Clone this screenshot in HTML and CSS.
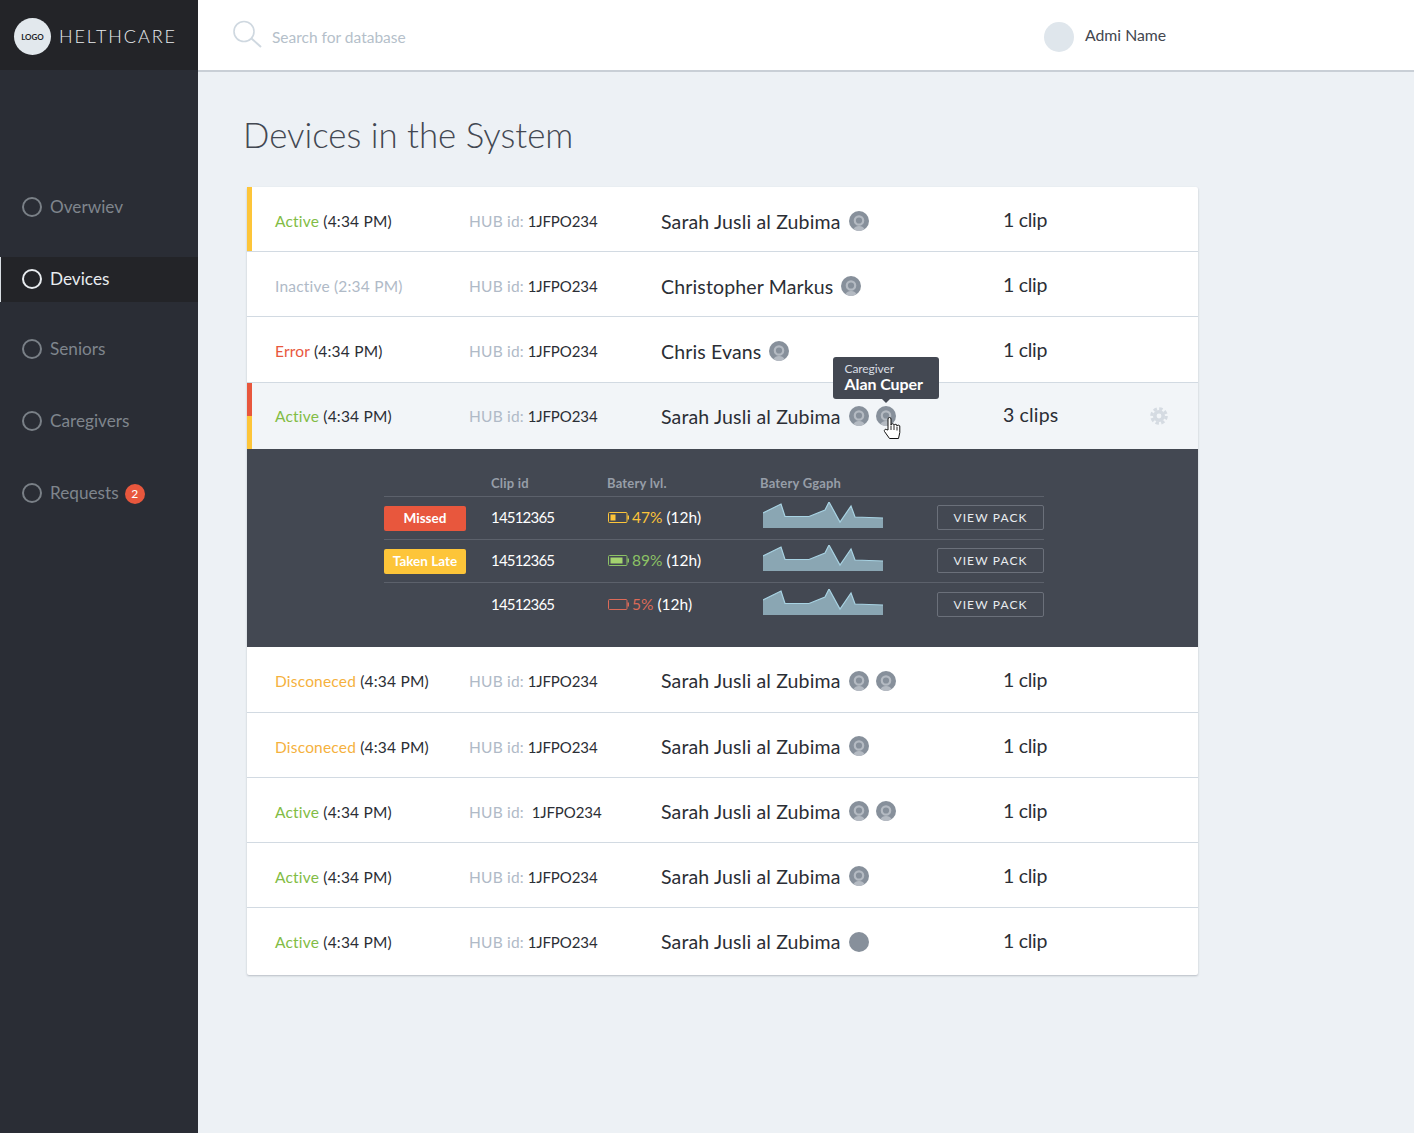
FILE: index.html
```html
<!DOCTYPE html>
<html lang="en">
    <head>
        <meta charset="UTF-8" />
        <meta name="viewport" content="width=device-width, initial-scale=1.0" />
        <title>Devices in the System</title>
        <link rel="stylesheet" href="styles.css">
    </head>
    <body>
        <svg class="defs" width="0" height="0" aria-hidden="true">
            <symbol id="person" viewBox="0 0 20 20">
                <circle cx="10" cy="10" r="10" fill="#87909b" />
                <path d="M4.500 18.300c1-2.500 3-3.300 5.500-3.300s4.500.8 5.500 3.300a10 10 0 0 1-11 0z" fill="#b4bac2" />
                <circle cx="10" cy="9.500" r="4.200" fill="none" stroke="#b4bac2" stroke-width="2.200" />
            </symbol>
            <symbol id="spark" viewBox="0 0 120 26">
                <path d="M0 11 18 2 22 14.500H46L62 8 66 0 77 20 88 4 92 15 120 16V26H0z" fill="#8aa6b3" />
                <path d="M0 11 18 2 22 14.500H46L62 8 66 0 77 20 88 4 92 15 120 16" fill="none" stroke="#a8d3e3" stroke-width="1.200" />
            </symbol>
        </svg>

        <aside class="sidebar">
            <div class="logo">
                <span class="logo-mark">LOGO</span>
                <span class="logo-name">HELTHCARE</span>
            </div>
            <nav class="nav">
                <a class="nav-item"><i class="ring"></i>Overwiev</a>
                <a class="nav-item active"><i class="ring"></i>Devices</a>
                <a class="nav-item"><i class="ring"></i>Seniors</a>
                <a class="nav-item"><i class="ring"></i>Caregivers</a>
                <a class="nav-item"><i class="ring"></i>Requests<span class="count">2</span></a>
            </nav>
        </aside>

        <div class="main">
            <header class="topbar">
                <div class="search">
                    <svg width="30" height="30" viewBox="0 0 30 30">
                        <circle cx="12" cy="11.500" r="10" fill="none" stroke="#cfd8e0" stroke-width="1.600" />
                        <path d="M19.500 18.500 29 27" fill="none" stroke="#cfd8e0" stroke-width="2" />
                    </svg>
                    <span>Search for database</span>
                </div>
                <div class="user">
                    <span class="user-pic"></span>
                    <span class="user-name">Admi Name</span>
                </div>
            </header>

            <section class="content">
                <h1>Devices in the System</h1>

                <div class="card">
                    <div class="row">
                        <i class="bar bar-yellow"></i>
                        <div class="status"><b class="green">Active</b> (4:34 PM)</div>
                        <div class="hub"><b>HUB id:</b> 1JFPO234</div>
                        <div class="name">Sarah Jusli al Zubima<svg class="person"><use href="#person" /></svg></div>
                        <div class="clips">1 clip</div>
                    </div>
                    <div class="row">
                        <i></i>
                        <div class="status grey"><b class="grey">Inactive</b> (2:34 PM)</div>
                        <div class="hub"><b>HUB id:</b> 1JFPO234</div>
                        <div class="name">Christopher Markus<svg class="person"><use href="#person" /></svg></div>
                        <div class="clips">1 clip</div>
                    </div>
                    <div class="row tall">
                        <i></i>
                        <div class="status"><b class="red">Error</b> (4:34 PM)</div>
                        <div class="hub"><b>HUB id:</b> 1JFPO234</div>
                        <div class="name">Chris Evans<svg class="person"><use href="#person" /></svg></div>
                        <div class="clips">1 clip</div>
                    </div>
                    <div class="row open">
                        <i class="bar bar-split"></i>
                        <div class="status"><b class="green">Active</b> (4:34 PM)</div>
                        <div class="hub"><b>HUB id:</b> 1JFPO234</div>
                        <div class="name">Sarah Jusli al Zubima<svg class="person"><use href="#person" /></svg>
                            <span class="hovered">
                                <svg class="person"><use href="#person" /></svg>
                                <span class="tooltip"><small>Caregiver</small>Alan Cuper</span>
                                <svg class="hand" width="18" height="24" viewBox="0 0 18 24">
                                    <path d="M5 14V3a1.500 1.500 0 0 1 3 0v6a1.500 1.500 0 0 1 3 .5 1.500 1.500 0 0 1 3 .7 1.400 1.400 0 0 1 2.800.8v5.500L15.500 22.500H6.500L1.500 15.500c-.8-1.500 1-3 2.300-1.800z" fill="#fff" stroke="#111" stroke-width="1" stroke-linejoin="round" />
                                    <path d="M8 9.500v4.500M11 10v4M14 11v3.500" stroke="#111" stroke-width=".9" fill="none" />
                                </svg>
                            </span>
                        </div>
                        <div class="clips clips-wide">3 clips
                            <svg class="gear" width="18" height="18" viewBox="0 0 18 18">
                                <circle cx="9" cy="9" r="7.200" fill="none" stroke="#d5dbe2" stroke-width="3.200" stroke-dasharray="3.400 2.250" />
                                <circle cx="9" cy="9" r="4.200" fill="none" stroke="#d5dbe2" stroke-width="3.600" />
                            </svg>
                        </div>
                    </div>

                    <div class="detail">
                        <div class="detail-head">
                            <span></span>
                            <span>Clip id</span>
                            <span>Batery lvl.</span>
                            <span>Batery Ggaph</span>
                            <span></span>
                        </div>
                        <div class="detail-row">
                            <span class="pill pill-red">Missed</span>
                            <span class="clip-id">14512365</span>
                            <span class="battery">
                                <svg width="21" height="11" viewBox="0 0 21 11">
                                    <rect x=".5" y=".5" width="18.500" height="10" rx="1" fill="none" stroke="#fdc539" />
                                    <rect x="2.500" y="2.500" width="5" height="6" fill="#fdc539" />
                                    <rect x="19.500" y="3.500" width="1.500" height="4" fill="#fdc539" />
                                </svg>
                                <em class="yellow">47%</em>
                                <span>(12h)</span>
                            </span>
                            <svg class="spark"><use href="#spark" /></svg>
                            <a class="pack">VIEW PACK</a>
                        </div>
                        <div class="detail-row">
                            <span class="pill pill-yellow">Taken Late</span>
                            <span class="clip-id">14512365</span>
                            <span class="battery">
                                <svg width="21" height="11" viewBox="0 0 21 11">
                                    <rect x=".5" y=".5" width="18.500" height="10" rx="1" fill="none" stroke="#8cc265" />
                                    <rect x="2.500" y="2.500" width="12" height="6" fill="#a4d36f" />
                                    <rect x="19.500" y="3.500" width="1.500" height="4" fill="#8cc265" />
                                </svg>
                                <em class="lime">89%</em>
                                <span>(12h)</span>
                            </span>
                            <svg class="spark"><use href="#spark" /></svg>
                            <a class="pack">VIEW PACK</a>
                        </div>
                        <div class="detail-row last">
                            <span></span>
                            <span class="clip-id">14512365</span>
                            <span class="battery">
                                <svg width="21" height="11" viewBox="0 0 21 11">
                                    <rect x=".5" y=".5" width="18.500" height="10" rx="1" fill="none" stroke="#dc6a58" />
                                    <rect x="19.500" y="3.500" width="1.500" height="4" fill="#dc6a58" />
                                </svg>
                                <em class="coral">5%</em>
                                <span>(12h)</span>
                            </span>
                            <svg class="spark"><use href="#spark" /></svg>
                            <a class="pack">VIEW PACK</a>
                        </div>
                    </div>

                    <div class="row tall">
                        <i></i>
                        <div class="status"><b class="orange">Disconeced</b> (4:34 PM)</div>
                        <div class="hub"><b>HUB id:</b> 1JFPO234</div>
                        <div class="name">Sarah Jusli al Zubima<svg class="person"><use href="#person" /></svg><svg class="person next"><use href="#person" /></svg></div>
                        <div class="clips">1 clip</div>
                    </div>
                    <div class="row">
                        <i></i>
                        <div class="status"><b class="orange">Disconeced</b> (4:34 PM)</div>
                        <div class="hub"><b>HUB id:</b> 1JFPO234</div>
                        <div class="name">Sarah Jusli al Zubima<svg class="person"><use href="#person" /></svg></div>
                        <div class="clips">1 clip</div>
                    </div>
                    <div class="row">
                        <i></i>
                        <div class="status"><b class="green">Active</b> (4:34 PM)</div>
                        <div class="hub"><b class="wide">HUB id:</b> 1JFPO234</div>
                        <div class="name">Sarah Jusli al Zubima<svg class="person"><use href="#person" /></svg><svg class="person next"><use href="#person" /></svg></div>
                        <div class="clips">1 clip</div>
                    </div>
                    <div class="row">
                        <i></i>
                        <div class="status"><b class="green">Active</b> (4:34 PM)</div>
                        <div class="hub"><b>HUB id:</b> 1JFPO234</div>
                        <div class="name">Sarah Jusli al Zubima<svg class="person"><use href="#person" /></svg></div>
                        <div class="clips">1 clip</div>
                    </div>
                    <div class="row end">
                        <i></i>
                        <div class="status"><b class="green">Active</b> (4:34 PM)</div>
                        <div class="hub"><b>HUB id:</b> 1JFPO234</div>
                        <div class="name">Sarah Jusli al Zubima<span class="person-blank"></span></div>
                        <div class="clips">1 clip</div>
                    </div>
                </div>
            </section>
        </div>
    </body>
</html>
```

FILE: styles.css
```css
* {
    margin: 0;
    padding: 0;
    box-sizing: border-box;
}

body {
    display: flex;
    height: 1133px;
    overflow: hidden;
    font-family: "Lato", "Noto Sans", sans-serif;
    color: #2b2e35;
    background: #edf1f5;
}

.defs {
    position: absolute;
}

/* sidebar */

.sidebar {
    width: 198px;
    flex: none;
    background: #2a2d35;
}

.logo {
    display: flex;
    align-items: center;
    height: 70px;
    padding: 3px 0 0 14px;
    background: #232428;
}

.logo-mark {
    display: flex;
    align-items: center;
    justify-content: center;
    width: 37px;
    height: 37px;
    border-radius: 50%;
    background: #e2e8ed;
    color: #232428;
    font-size: 8px;
    font-weight: 700;
}

.logo-name {
    margin-left: 8px;
    padding-bottom: 2px;
    color: #e8ecef;
    font-size: 18px;
    font-weight: 300;
    letter-spacing: 1.900px;
}

.nav {
    display: flex;
    flex-direction: column;
    gap: 27px;
    padding-top: 115px;
}

.nav-item {
    display: flex;
    align-items: center;
    height: 45px;
    padding: 0 0 2px 22px;
    color: #7f858d;
    font-size: 17.200px;
}

.nav-item.active {
    margin-bottom: -2px;
    background: #232428;
    border-left: 1px solid #d9dee3;
    padding-left: 21px;
    color: #e8ecef;
}

.ring {
    width: 20px;
    height: 20px;
    margin-right: 8px;
    border: 2px solid #7a8087;
    border-radius: 50%;
}

.active .ring {
    border-color: #e8ecef;
}

.count {
    display: flex;
    align-items: center;
    justify-content: center;
    width: 20px;
    height: 20px;
    margin: 2px 0 0 6px;
    border-radius: 50%;
    background: #e8573d;
    color: #fff;
    font-size: 12px;
}

/* header */

.main {
    flex: 1;
    min-width: 0;
}

.topbar {
    display: flex;
    align-items: center;
    height: 72px;
    padding-left: 34px;
    background: #fff;
    border-bottom: 2px solid #c9cfd6;
}

.search {
    display: flex;
    align-items: center;
    width: 812px;
    color: #b5bfca;
    font-size: 15.500px;
}

.search span {
    margin: 3px 0 0 10px;
}

.user {
    display: flex;
    align-items: center;
    gap: 11px;
    font-size: 15.800px;
    color: #43474f;
}

.user-pic {
    width: 30px;
    height: 30px;
    margin-top: 4px;
    border-radius: 50%;
    background: #dfe6ec;
}

.user-name {
    padding-bottom: 2px;
}

/* list */

.content {
    padding: 42px 0 0 45px;
}

h1 {
    color: #434852;
    font-size: 34.800px;
    font-weight: 300;
    line-height: 42px;
}

.card {
    width: 951px;
    margin: 31px 0 0 4px;
    background: #fff;
    border-radius: 2px;
    box-shadow: 0 1px 2px rgba(60, 70, 85, .3);
}

.row {
    display: grid;
    grid-template-columns: 28px 194px 192px 342px 1fr;
    align-items: center;
    height: 65px;
    border-bottom: 1px solid #d2dae2;
}

.row.tall {
    height: 66px;
    padding-bottom: 1px;
}

.detail + .row.tall {
    padding-bottom: 0;
}

.row.open {
    height: 66px;
    border-bottom: 0;
    background: #f2f5f8;
}

.row.end {
    height: 67px;
    padding-bottom: 2px;
    border-bottom: 0;
}

.bar {
    width: 5px;
    height: 100%;
}

.bar-yellow {
    background: #fdc539;
}

.bar-split {
    background: linear-gradient(#e8573d 50%, #fdc539 50%);
}

.status {
    font-size: 15.500px;
    letter-spacing: .2px;
    padding-top: 3px;
}

.status b,
.hub b {
    font-weight: 400;
}

.green {
    color: #82bc45;
}

.red {
    color: #e8573d;
}

.orange {
    color: #f5b13d;
}

.status.grey,
.grey {
    color: #b0bac7;
}

.hub {
    font-size: 15px;
    letter-spacing: -.1px;
    padding-top: 3px;
}

.hub b {
    color: #b0bac7;
    font-size: 15.500px;
    letter-spacing: .2px;
}

.hub b.wide {
    margin-right: 4px;
}

.name {
    display: flex;
    align-items: center;
    gap: 8px;
    font-size: 19.500px;
    letter-spacing: .15px;
    padding-top: 4px;
}

.detail ~ .row .name {
    padding-top: 2px;
}

.row.open .status,
.row.open .hub,
.row.open .name {
    padding-top: 0;
}

.person {
    width: 20px;
    height: 20px;
}

.person.next {
    margin-left: -1px;
}

.person-blank {
    width: 20px;
    height: 20px;
    border-radius: 50%;
    background: #87909b;
}

.hovered {
    position: relative;
    display: flex;
    margin-left: -1px;
}

.tooltip {
    position: absolute;
    left: -43px;
    bottom: 27px;
    width: 106px;
    height: 42px;
    padding: 5px 12px;
    border-radius: 3px;
    background: #434852;
    color: #fff;
    font-size: 16px;
    font-weight: 700;
    line-height: 18px;
    letter-spacing: -.1px;
}

.tooltip::after {
    content: "";
    position: absolute;
    left: 48px;
    bottom: -4px;
    border: 5px solid transparent;
    border-bottom: 0;
    border-top-color: #434852;
}

.tooltip small {
    display: block;
    color: #d8dde3;
    font-size: 12px;
    font-weight: 400;
    line-height: 13px;
}

.hand {
    position: absolute;
    left: 7px;
    top: 10px;
}

.clips {
    font-size: 19.500px;
    letter-spacing: -.3px;
}

.clips-wide {
    display: flex;
    align-items: center;
    justify-content: space-between;
    padding: 0 30px 3px 0;
    letter-spacing: .15px;
}

.gear {
    margin-top: 3px;
}

/* expanded row */

.detail {
    height: 198px;
    padding: 24px 154px 0 137px;
    background: #434852;
    color: #fff;
}

.detail-head,
.detail-row {
    display: grid;
    grid-template-columns: 107px 116px 153px 177px 107px;
    align-items: center;
}

.detail-head {
    height: 24px;
    border-bottom: 1px solid #5c616b;
    color: #979ea8;
    font-size: 13px;
    font-weight: 700;
    letter-spacing: .2px;
    padding-bottom: 4px;
}

.detail-row {
    height: 43px;
    padding-bottom: 2px;
    border-bottom: 1px solid #5c616b;
}

.detail-row.last {
    height: 44px;
    border-bottom: 0;
}

.pill {
    display: flex;
    align-items: center;
    justify-content: center;
    width: 82px;
    height: 25px;
    margin-top: 2px;
    border-radius: 2px;
    color: #fff;
    font-size: 13.500px;
    font-weight: 700;
}

.pill-red {
    background: #e8573d;
}

.pill-yellow {
    background: #fdc539;
}

.clip-id {
    font-size: 15px;
    letter-spacing: -.8px;
}

.battery {
    display: flex;
    align-items: center;
    gap: 3px;
    padding-left: 1px;
    font-size: 15.500px;
}

.battery svg {
    flex: none;
}

.battery em {
    font-style: normal;
    margin-right: 1px;
}

.yellow {
    color: #fdc539;
}

.lime {
    color: #8cc265;
}

.coral {
    color: #dc6a58;
}

.spark {
    width: 120px;
    height: 26px;
    margin: 0 0 4px 3px;
}

.pack {
    display: flex;
    align-items: center;
    justify-content: center;
    height: 25px;
    border: 1px solid #6b707a;
    border-radius: 2px;
    color: #e8ecef;
    font-size: 12px;
    letter-spacing: 1.100px;
}
```
